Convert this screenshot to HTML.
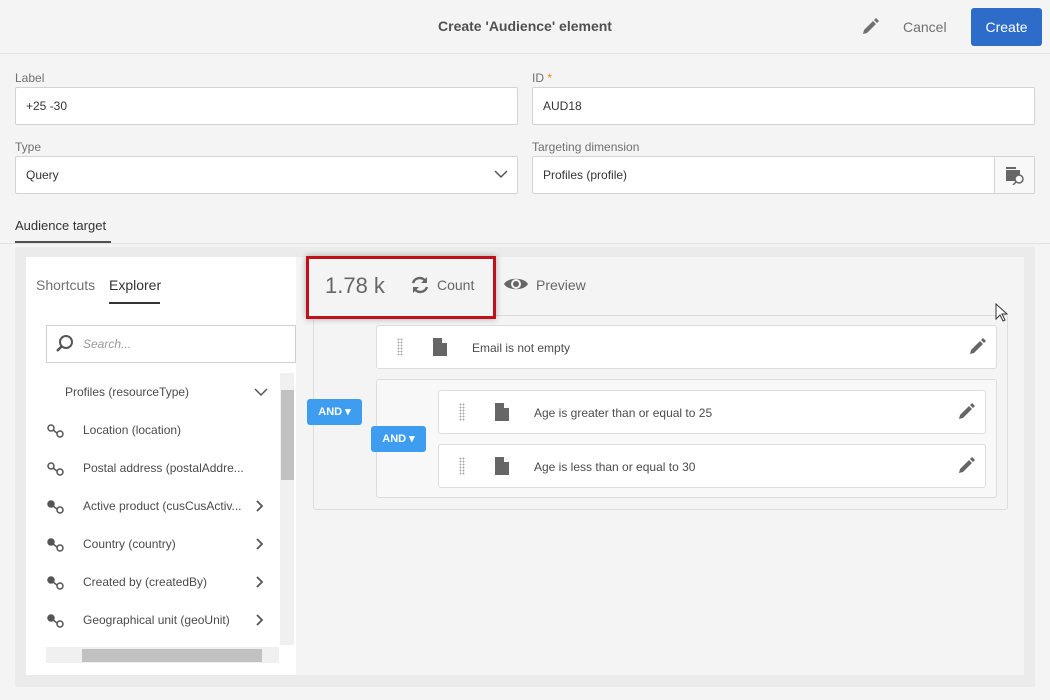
<!DOCTYPE html>
<html><head><meta charset="utf-8"><style>
*{box-sizing:border-box;margin:0;padding:0}
body{width:1050px;height:700px;background:#f4f4f4;font-family:"Liberation Sans",sans-serif;color:#4b4b4b;position:relative;overflow:hidden;font-size:13px}
.a{position:absolute}
.hdr{left:0;top:0;width:1050px;height:54px;border-bottom:1px solid #e2e2e2}
.lbl{font-size:12px;color:#707070}
.inp{background:#fff;border:1px solid #d3d3d3;border-radius:2px;height:38px;padding:11px 10px;font-size:12px;color:#333}
.row{font-size:12px;color:#4b4b4b}
.card{background:#fff;border:1px solid #dcdcdc;border-radius:3px}
.and{background:#3e9df0;color:#fff;font-weight:bold;font-size:11px;border-radius:3px;text-align:center;line-height:26px}
.grip{width:6px;height:18px;background-image:radial-gradient(#aaa 0.8px,transparent 0.9px);background-size:3px 3px}
</style></head><body>
<div class="a hdr"></div>
<div class="a" style="left:0;width:1050px;top:18px;text-align:center;font-size:14px;font-weight:bold;color:#505050">Create 'Audience' element</div>
<svg class="a" style="top:17px;left:860px" width="20" height="20" viewBox="0 0 20 20"><path d="M3 17l1-4 9-9 3 3-9 9z M14 3l2-2 3 3-2 2z" fill="#707070"/></svg>
<div class="a" style="left:903px;top:19px;font-size:14px;color:#707070">Cancel</div>
<div class="a" style="left:971px;top:8px;width:71px;height:38px;background:#2d6cc8;border-radius:3px;color:#fff;font-size:14px;text-align:center;line-height:38px">Create</div>

<div class="a lbl" style="left:15px;top:71px">Label</div>
<div class="a inp" style="left:15px;top:87px;width:503px">+25 -30</div>
<div class="a lbl" style="left:532px;top:71px">ID <span style="color:#e68619">*</span></div>
<div class="a inp" style="left:532px;top:87px;width:503px">AUD18</div>
<div class="a lbl" style="left:15px;top:140px">Type</div>
<div class="a inp" style="left:15px;top:156px;width:503px">Query</div>
<svg class="a" style="left:494px;top:169px" width="14" height="10"><path d="M1 2l6 6 6-6" stroke="#555" stroke-width="1.5" fill="none"/></svg>
<div class="a lbl" style="left:532px;top:140px">Targeting dimension</div>
<div class="a inp" style="left:532px;top:156px;width:503px">Profiles (profile)</div>
<div class="a" style="left:994px;top:157px;width:40px;height:36px;border-left:1px solid #d3d3d3;background:#f8f8f8"></div>
<svg class="a" style="left:1005px;top:165px" width="20" height="20"><rect x="1" y="2" width="10" height="2" fill="#666"/><rect x="1" y="5" width="14" height="11" fill="#666"/><circle cx="14" cy="14" r="4" fill="#f8f8f8" stroke="#666" stroke-width="1.5"/><path d="M11 17l-3 3" stroke="#666" stroke-width="1.5"/></svg>

<div class="a" style="left:15px;top:218px;font-size:13px;color:#333">Audience target</div>
<div class="a" style="left:15px;top:241px;width:96px;height:2px;background:#505050"></div>
<div class="a" style="left:0;top:243px;width:1050px;height:1px;background:#e2e2e2"></div>

<div class="a" style="left:15px;top:247px;width:1020px;height:440px;background:#ebebeb;border-radius:2px"></div>
<div class="a" style="left:296px;top:257px;width:728px;height:418px;background:#f4f4f4"></div>
<div class="a" style="left:26px;top:257px;width:270px;height:418px;background:#fff"></div>
<div class="a" style="left:36px;top:277px;font-size:14px;color:#707070">Shortcuts</div>
<div class="a" style="left:109px;top:277px;font-size:14px;color:#333">Explorer</div>
<div class="a" style="left:109px;top:302px;width:51px;height:2px;background:#333"></div>
<div class="a" style="left:46px;top:325px;width:250px;height:38px;border:1px solid #cfcfcf;background:#fff"></div>
<svg class="a" style="left:55px;top:334px" width="20" height="20"><circle cx="11" cy="8" r="6" stroke="#555" stroke-width="2" fill="none"/><path d="M7 12l-5 5" stroke="#555" stroke-width="2.5"/></svg>
<div class="a" style="left:83px;top:337px;font-size:12px;font-style:italic;color:#999">Search...</div>
<div class="a row" style="left:65px;top:385px">Profiles (resourceType)</div>
<svg class="a" style="left:254px;top:387px" width="14" height="10"><path d="M1 2l6 6 6-6" stroke="#555" stroke-width="1.5" fill="none"/></svg>
<div class="a" style="left:280px;top:373px;width:14px;height:272px;background:#f0f0f0"></div>
<div class="a" style="left:281px;top:390px;width:13px;height:90px;background:#c1c1c1"></div>
<div class="a" style="left:46px;top:647px;width:233px;height:16px;background:#f0f0f0"></div>
<div class="a" style="left:82px;top:649px;width:180px;height:13px;background:#c1c1c1"></div>

<div class="a row" style="left:83px;top:423px">Location (location)</div>
<div class="a row" style="left:83px;top:461px">Postal address (postalAddre...</div>
<div class="a row" style="left:83px;top:499px">Active product (cusCusActiv...</div>
<div class="a row" style="left:83px;top:537px">Country (country)</div>
<div class="a row" style="left:83px;top:575px">Created by (createdBy)</div>
<div class="a row" style="left:83px;top:613px">Geographical unit (geoUnit)</div>
<svg class="a" style="left:46px;top:420px" width="240" height="210">
<g stroke="#555" stroke-width="1.5" fill="none">
<circle cx="5" cy="8" r="3"/><circle cx="14" cy="14" r="3"/><path d="M7 10l4 3"/>
<g transform="translate(0,38)"><circle cx="5" cy="8" r="3"/><circle cx="14" cy="14" r="3"/><path d="M7 10l4 3"/></g>
<g transform="translate(0,76)"><circle cx="5" cy="8" r="3" fill="#555"/><circle cx="14" cy="14" r="3"/><path d="M7 10l4 3"/></g>
<g transform="translate(0,114)"><circle cx="5" cy="8" r="3" fill="#555"/><circle cx="14" cy="14" r="3"/><path d="M7 10l4 3"/></g>
<g transform="translate(0,152)"><circle cx="5" cy="8" r="3" fill="#555"/><circle cx="14" cy="14" r="3"/><path d="M7 10l4 3"/></g>
<g transform="translate(0,190)"><circle cx="5" cy="8" r="3" fill="#555"/><circle cx="14" cy="14" r="3"/><path d="M7 10l4 3"/></g>
<path d="M211 81l5 5-5 5M211 119l5 5-5 5M211 157l5 5-5 5M211 195l5 5-5 5" stroke-width="1.8"/>
</g></svg>

<div class="a" style="left:313px;top:315px;width:695px;height:195px;border:1px solid #dcdcdc;border-radius:3px"></div>
<div class="a" style="left:306px;top:256px;width:190px;height:63px;border:3px solid #c0111b;background:#f4f4f4;box-shadow:0 0 6px rgba(0,0,0,.3)"></div>
<div class="a" style="left:325px;top:273px;font-size:22px;color:#666">1.78 k</div>
<svg class="a" style="left:410px;top:275px" width="20" height="20"><path d="M16 7A7 7 0 0 0 3 8M4 13a7 7 0 0 0 13-1" stroke="#666" stroke-width="2.5" fill="none"/><path d="M17 2v6h-6zM3 18v-6h6z" fill="#666"/></svg>
<div class="a" style="left:437px;top:277px;font-size:14px;color:#666">Count</div>
<svg class="a" style="left:503px;top:275px" width="26" height="18"><path d="M1 9C5 2 21 2 25 9C21 16 5 16 1 9z" fill="#666"/><circle cx="13" cy="9" r="5" fill="#f4f4f4"/><circle cx="13" cy="9" r="3" fill="#666"/></svg>
<div class="a" style="left:536px;top:277px;font-size:14px;color:#666">Preview</div>

<div class="a card" style="left:376px;top:325px;width:621px;height:44px"></div>
<div class="a card" style="left:376px;top:379px;width:621px;height:119px;background:#f8f8f8"></div>
<div class="a card" style="left:438px;top:390px;width:548px;height:44px"></div>
<div class="a card" style="left:438px;top:444px;width:548px;height:44px"></div>
<div class="a grip" style="left:397px;top:338px"></div>
<div class="a grip" style="left:459px;top:403px"></div>
<div class="a grip" style="left:459px;top:457px"></div>
<svg class="a" style="left:433px;top:338px" width="14" height="18"><path d="M0 0h9l5 5v13H0z" fill="#666"/><path d="M9 0v5h5" fill="#fff"/></svg>
<svg class="a" style="left:495px;top:403px" width="14" height="18"><path d="M0 0h9l5 5v13H0z" fill="#666"/><path d="M9 0v5h5" fill="#fff"/></svg>
<svg class="a" style="left:495px;top:457px" width="14" height="18"><path d="M0 0h9l5 5v13H0z" fill="#666"/><path d="M9 0v5h5" fill="#fff"/></svg>
<div class="a row" style="left:472px;top:341px">Email is not empty</div>
<div class="a row" style="left:534px;top:406px">Age is greater than or equal to 25</div>
<div class="a row" style="left:534px;top:460px">Age is less than or equal to 30</div>
<svg class="a" style="left:967px;top:337px" width="20" height="20"><path d="M3 17l1-4 9-9 3 3-9 9z M14 3l2-2 3 3-2 2z" fill="#666"/></svg>
<svg class="a" style="left:956px;top:402px" width="20" height="20"><path d="M3 17l1-4 9-9 3 3-9 9z M14 3l2-2 3 3-2 2z" fill="#666"/></svg>
<svg class="a" style="left:956px;top:456px" width="20" height="20"><path d="M3 17l1-4 9-9 3 3-9 9z M14 3l2-2 3 3-2 2z" fill="#666"/></svg>
<div class="a and" style="left:307px;top:399px;width:55px;height:26px">AND ▾</div>
<div class="a and" style="left:371px;top:426px;width:55px;height:26px">AND ▾</div>
<svg class="a" style="left:995px;top:303px" width="14" height="20"><path d="M1 1v15l4-4 3 6 2-1-3-6h5z" fill="#fff" stroke="#333"/></svg>
</body></html>
